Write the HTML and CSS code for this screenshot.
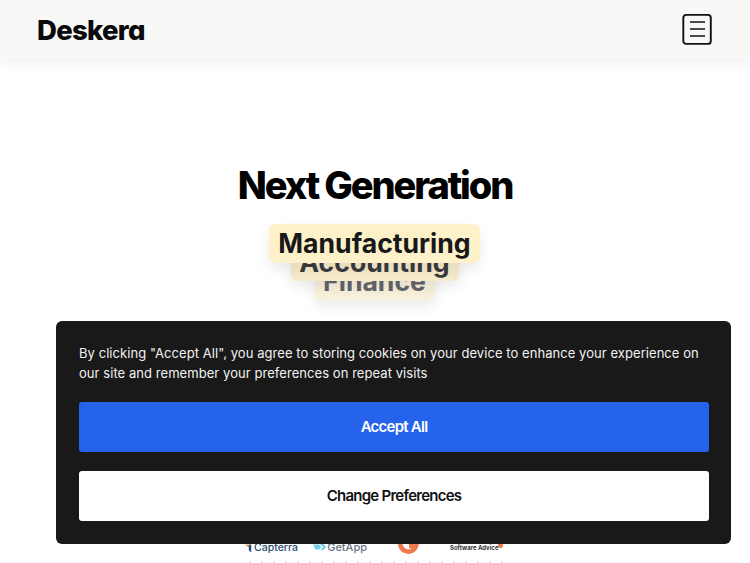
FILE: index.html
```html
<!DOCTYPE html>
<html lang="en">
<head>
  <meta charset="UTF-8" />
  <title>Deskera</title>
  <link rel="stylesheet" href="styles.css">
</head>
<body>

  <header class="topo">
    <a class="logo" href="#">Deskera</a>
    <button class="btn-menu" aria-label="Menu">
      <svg width="30" height="31" viewBox="0 0 30 31" fill="none" stroke="#111">
        <rect x="1.3" y="0.9" width="27.5" height="29" rx="3" stroke-width="1.9" />
        <path d="M8 8H23M8 15H23M8 22H23" stroke-width="1.7" />
      </svg>
    </button>
  </header>

  <main class="hero">
    <h1>Next Generation</h1>
    <div class="pilha">
      <span class="etiqueta etiqueta-1">Manufacturing</span>
      <span class="etiqueta etiqueta-2">Accounting</span>
      <span class="etiqueta etiqueta-3">Finance</span>
    </div>

    <div class="selos">
      <span class="selo selo-capterra">
        <svg width="10" height="16" viewBox="0 0 10 16"><path d="M1 5L6 5V9Z" fill="#ff9d28" /><path d="M6 5H9V15L6 12Z" fill="#1f4f8f" /></svg>
        Capterra
      </span>
      <span class="selo selo-getapp">
        <svg width="17" height="10" viewBox="0 0 17 10"><path d="M0 2H7L10 5L7 8H3ZM8 1H12L16 5L12 9H9L12 5Z" fill="#6fcfe6" /></svg>
        GetApp
      </span>
      <span class="selo selo-g2">
        <svg width="22" height="22" viewBox="0 0 22 22" fill="none"><path d="M17 5A8 8 0 1 0 19 13H12" stroke="#ef7a4e" stroke-width="4.5" /></svg>
      </span>
      <span class="selo selo-advice">Software Advice<i class="ponto"></i></span>
    </div>
    <div class="estrelas"></div>
  </main>

  <div class="cookies">
    <p>By clicking "Accept All", you agree to storing cookies on your device to enhance your experience on our site and remember your preferences on repeat visits</p>
    <button class="btn btn-aceitar">Accept All</button>
    <button class="btn btn-preferencias">Change Preferences</button>
  </div>

</body>
</html>
```

FILE: styles.css
```css
html, body {
  height: 100%;
}

body {
  margin: 0;
  padding: 0;
  font-family: 'Inter', sans-serif;
  background: white;
  color: #000;
  overflow: hidden;
}

.topo {
  height: 59px;
  box-sizing: border-box;
  padding: 0 38px 0 37px;
  background: #f8f8f7;
  box-shadow: 0 3px 14px #00000012;
  display: flex;
  justify-content: space-between;
  align-items: center;
}

.logo {
  font-size: 27.5px;
  font-weight: 800;
  letter-spacing: -0.7px;
  font-feature-settings: 'cv11';
  color: #0a0a0a;
  text-decoration: none;
}

.btn-menu {
  padding: 0;
  border: none;
  background: none;
  display: flex;
}

.hero {
  display: flex;
  flex-direction: column;
  align-items: center;
}

h1 {
  margin: 101px 0 0;
  font-size: 38px;
  line-height: 50px;
  font-weight: 800;
  letter-spacing: -2.1px;
}

.pilha {
  margin-top: 14px;
  margin-left: -1px;
  display: flex;
  flex-direction: column;
  align-items: center;
}

.etiqueta {
  display: block;
  position: relative;
  height: 39px;
  border-radius: 6px;
  font-size: 26.6px;
  font-weight: 700;
  text-align: center;
  box-shadow: 0 7px 14px #00000014;
}

.etiqueta-1 {
  z-index: 3;
  width: 211px;
  line-height: 39px;
  color: #18181b;
  background: #fdf1c9;
}

.etiqueta-2 {
  z-index: 2;
  width: 168px;
  margin-top: -21px;
  line-height: 41px;
  color: #3a3b40;
  background: #f6eccb;
}

.etiqueta-3 {
  z-index: 1;
  width: 120px;
  margin-top: -20px;
  line-height: 41px;
  color: #64656a;
  background: #f8f1dc;
}

.selos {
  height: 22px;
  margin-top: 236px;
  display: flex;
  align-items: center;
  color: #4a5568;
}

.selo {
  display: flex;
  align-items: center;
  font-weight: 500;
}

.selo-capterra {
  gap: 2px;
  width: 54px;
  color: #2c4a6e;
  font-size: 10.5px;
}

.selo-getapp {
  gap: 0;
  width: 55px;
  margin-left: 14px;
  padding-left: 1px;
  box-sizing: border-box;
  color: #6b7380;
  font-size: 11px;
}

.selo-g2 {
  margin-left: 30px;
  margin-top: -6px;
}

.selo-advice {
  width: 56px;
  margin-left: 31px;
  padding-top: 1px;
  font-size: 6px;
  font-weight: 700;
  color: #333;
  align-items: flex-start;
  white-space: nowrap;
}

.ponto {
  flex: none;
  width: 5px;
  height: 5px;
  margin-top: -1px;
  border-radius: 50%;
  background: #ef7a4e;
}

.estrelas {
  width: 262px;
  height: 2px;
  margin-top: 3px;
  background: radial-gradient(circle, #e6e6e6 1px, transparent 1px) 0 0 / 12px 2px;
}

/* COOKIES */
.cookies {
  position: fixed;
  left: 56px;
  top: 321px;
  width: 675px;
  height: 223px;
  box-sizing: border-box;
  padding: 22px 22px 0 23px;
  background: #191919;
  border-radius: 6px;
  display: flex;
  flex-direction: column;
  z-index: 10;
}

.cookies p {
  margin: 0 0 19px;
  font-size: 13px;
  letter-spacing: 0.06px;
  line-height: 20px;
  color: #f2f2f2;
}

.btn {
  height: 50px;
  flex: none;
  border: none;
  border-radius: 3px;
  padding: 0 0 2px;
  font-family: inherit;
  font-size: 15px;
  font-weight: 600;
  letter-spacing: -0.75px;
  cursor: pointer;
}

.btn-aceitar {
  background: #2563eb;
  color: white;
  margin-bottom: 19px;
}

.btn-preferencias {
  background: white;
  color: #111;
}
```
